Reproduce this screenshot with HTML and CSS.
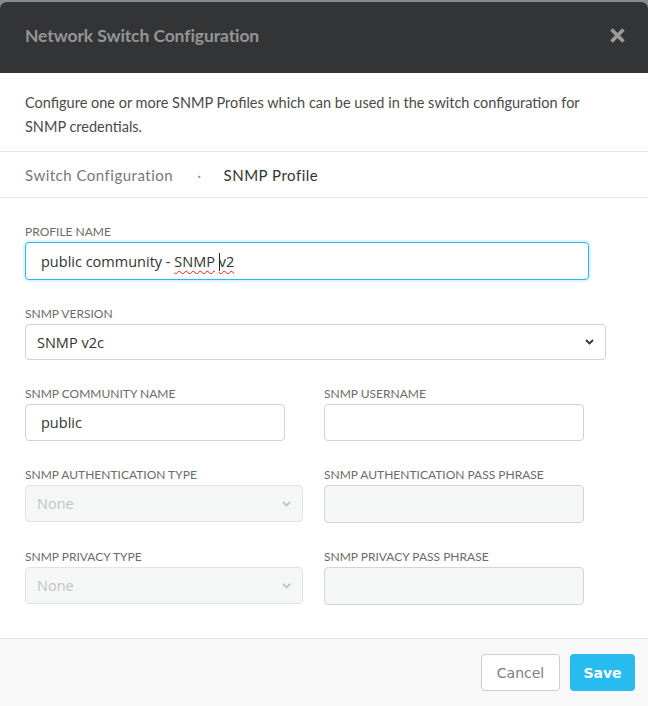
FILE: index.html
```html
<!DOCTYPE html>
<html>
<head>
<meta charset="utf-8">
<link rel="stylesheet" href="styles.css">
</head>
<body>
<div class="modal">
  <div class="modal-header">
    <h1 class="modal-title">Network Switch Configuration</h1>
    <button class="close" aria-label="Close">
      <svg width="17" height="17" viewBox="0 0 17 17"><path d="M2.5 2.5 L14.5 14.5 M14.5 2.5 L2.5 14.5" stroke="#9b9b9b" stroke-width="3.6" stroke-linecap="butt"/></svg>
    </button>
  </div>
  <div class="intro">
    <p class="intro-text">Configure one or more SNMP Profiles which can be used in the switch configuration for SNMP credentials.</p>
  </div>
  <nav class="crumbs">
    <span class="crumb">Switch Configuration</span>
    <span class="sep">·</span>
    <span class="crumb current">SNMP Profile</span>
  </nav>
  <form class="form">
    <div class="field">
      <label class="label">PROFILE NAME</label>
      <div class="input focused w-profile"><span class="val">public community - <span class="typo">SNMP</span> <span class="caret"></span><span class="typo">v2</span></span></div>
    </div>
    <div class="field">
      <label class="label">SNMP VERSION</label>
      <div class="select w-version"><span class="val">SNMP v2c</span><svg class="chev" width="9" height="6" viewBox="0 0 9 6"><path d="M1 1 L4.5 4.5 L8 1" fill="none" stroke="#333" stroke-width="1.8"/></svg></div>
    </div>
    <div class="row">
      <div class="field col-left">
        <label class="label">SNMP COMMUNITY NAME</label>
        <div class="input w-half"><span class="val">public</span></div>
      </div>
      <div class="field">
        <label class="label">SNMP USERNAME</label>
        <div class="input w-half"></div>
      </div>
    </div>
    <div class="row">
      <div class="field col-left">
        <label class="label">SNMP AUTHENTICATION TYPE</label>
        <div class="select disabled w-sel"><span class="val">None</span><svg class="chev" width="9" height="6" viewBox="0 0 9 6"><path d="M1 1 L4.5 4.5 L8 1" fill="none" stroke="#c4c4c4" stroke-width="1.8"/></svg></div>
      </div>
      <div class="field">
        <label class="label">SNMP AUTHENTICATION PASS PHRASE</label>
        <div class="input disabled w-half"></div>
      </div>
    </div>
    <div class="row">
      <div class="field col-left">
        <label class="label">SNMP PRIVACY TYPE</label>
        <div class="select disabled w-sel"><span class="val">None</span><svg class="chev" width="9" height="6" viewBox="0 0 9 6"><path d="M1 1 L4.5 4.5 L8 1" fill="none" stroke="#c4c4c4" stroke-width="1.8"/></svg></div>
      </div>
      <div class="field">
        <label class="label">SNMP PRIVACY PASS PHRASE</label>
        <div class="input disabled w-half"></div>
      </div>
    </div>
  </form>
  <div class="modal-footer">
    <button class="btn btn-cancel">Cancel</button>
    <button class="btn btn-save">Save</button>
  </div>
</div>
</body>
</html>
```
FILE: styles.css
```css
* { box-sizing: border-box; }
html, body { margin: 0; padding: 0; }
body {
  background: #8a8a8a;
  font-family: Lato, "Open Sans", sans-serif;
  width: 648px;
  height: 706px;
  overflow: hidden;
  padding-top: 2px;
}
.modal {
  background: #fff;
  border-radius: 6px 6px 0 0;
  overflow: hidden;
  height: 704px;
  display: flex;
  flex-direction: column;
}
.modal-header {
  background: #333436;
  height: 71px;
  display: flex;
  align-items: center;
  justify-content: space-between;
  padding: 0 22px 4px 25px;
}
.modal-title {
  margin: 0;
  font-size: 17.5px;
  font-weight: 700;
  color: #959595;
  letter-spacing: -0.1px;
}
.close {
  background: none;
  border: 0;
  padding: 0;
  width: 17px;
  height: 17px;
  display: block;
}
.close svg { display: block; }
.intro {
  padding: 18px 25px 12px;
  border-bottom: 1px solid #e6e6e6;
}
.intro-text {
  margin: 0;
  font-size: 14.5px;
  line-height: 24px;
  color: #4a4a4a;
}
.crumbs {
  height: 46px;
  display: flex;
  align-items: center;
  padding: 0 25px;
  border-bottom: 1px solid #e6e6e6;
  font-size: 15px;
  letter-spacing: 0.5px;
}
.crumb { color: #777; }
.crumb.current { color: #333; }
.sep { color: #999; margin: 0 22px 0 24px; }
.form {
  padding: 27px 25px 0;
  flex: 1;
}
.field { display: flex; flex-direction: column; }
.label {
  font-size: 12px;
  color: #6b6b6b;
  height: 14px;
  line-height: 14px;
  margin-bottom: 3px;
}
.field + .field { margin-top: 27px; }
.row { display: flex; margin-top: 27px; }
.row .field + .field { margin-top: 0; }
.col-left { width: 299px; }
.input, .select {
  border: 1px solid #d2d2d2;
  border-radius: 4px;
  height: 37px;
  display: flex;
  align-items: center;
  font-family: "Open Sans", sans-serif;
  font-size: 14.5px;
  color: #333;
  background: #fff;
}
.input { padding-left: 15px; }
.select { padding: 0 11px 0 11px; justify-content: space-between; height: 36px; }
.focused {
  border-color: #29b6f6;
  box-shadow: 0 0 0 2px #e3f4fc;
  height: 38px;
}
.w-profile { width: 564px; }
.w-version { width: 581px; }
.w-half { width: 260px; }
.w-sel { width: 278px; height: 37px; }
.disabled {
  background: #f5f6f6;
  border-color: #e1e3e3;
  color: #c2c4c6;
}
.input.disabled { border-color: #d4d6d6; height: 38px; }
.typo {
  text-decoration: underline wavy #e02020;
  text-decoration-thickness: 1px;
  text-underline-offset: 3px;
}
.caret {
  display: inline-block;
  width: 1px;
  height: 18px;
  background: #222;
  vertical-align: -4px;
  margin-right: -1px;
}
.chev { display: block; }
.modal-footer {
  height: 68px;
  background: #f8f8f8;
  border-top: 1px solid #e4e4e4;
  display: flex;
  justify-content: flex-end;
  align-items: center;
  padding: 0 13px 0 0;
  gap: 10px;
}
.btn {
  height: 37px;
  border-radius: 4px;
  font-family: "DejaVu Sans", sans-serif;
  font-size: 14px;
  padding: 0;
}
.btn-cancel {
  width: 79px;
  background: #fff;
  border: 1px solid #c9ced3;
  color: #7a7f84;
}
.btn-save {
  width: 65px;
  background: #28bbef;
  border: 0;
  color: #fff;
  font-weight: 700;
}
```
